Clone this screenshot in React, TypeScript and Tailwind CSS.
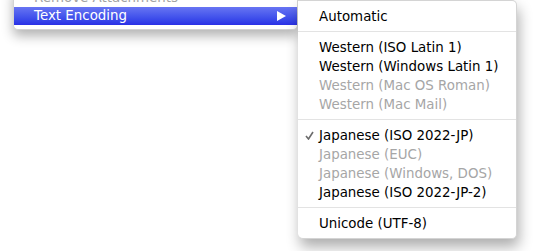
import React from 'react';

type Item = { label: string; disabled?: boolean; checked?: boolean } | 'sep';

const items: Item[] = [
  { label: 'Automatic' },
  'sep',
  { label: 'Western (ISO Latin 1)' },
  { label: 'Western (Windows Latin 1)' },
  { label: 'Western (Mac OS Roman)', disabled: true },
  { label: 'Western (Mac Mail)', disabled: true },
  'sep',
  { label: 'Japanese (ISO 2022-JP)', checked: true },
  { label: 'Japanese (EUC)', disabled: true },
  { label: 'Japanese (Windows, DOS)', disabled: true },
  { label: 'Japanese (ISO 2022-JP-2)' },
  'sep',
  { label: 'Unicode (UTF-8)' },
];

const App: React.FC = () => {
  return (
    <div className="w-[535px] h-[251px] bg-white overflow-hidden font-['DejaVu_Sans',sans-serif] text-[13.4px] leading-none">
      <div className="flex items-start">
        {/* parent menu */}
        <div className="ml-[13px] mt-[-12px] w-[285px] bg-white rounded-b-[5px] border border-t-0 border-[#d4d4d4] shadow-[0_6px_12px_rgba(0,0,0,0.3)] pb-[4px]">
          <div className="h-[19px] flex items-center pl-[20px] text-[#a3a3a3]">Remove Attachments</div>
          <div className="h-[18px] flex items-center justify-between pl-[20px] pr-[11px] text-white bg-gradient-to-b from-[#6874f2] to-[#2a2fe6]">
            <span>Text Encoding</span>
            <svg width="9" height="10" viewBox="0 0 9 10">
              <path d="M0 0 L9 5 L0 10 Z" fill="#fff" />
            </svg>
          </div>
        </div>

        {/* submenu */}
        <div className="w-[219px] bg-white rounded-tr-[5px] rounded-b-[5px] border border-[#d4d4d4] border-l-0 shadow-[2px_8px_14px_rgba(0,0,0,0.32)] pt-[6px] pb-[5px]">
          {items.map((it, i) =>
            it === 'sep' ? (
              <div key={i} className="h-[12px] pt-[5px]">
                <div className="h-px bg-[#e3e3e3]" />
              </div>
            ) : (
              <div
                key={i}
                className={`relative h-[19px] flex items-center pl-[21px] ${it.disabled ? 'text-[#a6a6a6]' : 'text-black'}`}
              >
                {it.checked && (
                  <svg className="absolute left-[7px] top-[5px]" width="9" height="9" viewBox="0 0 9 9">
                    <path d="M1 5 L3.5 8 L8 1" fill="none" stroke="#6b6b6b" strokeWidth="1.6" />
                  </svg>
                )}
                {it.label}
              </div>
            )
          )}
        </div>
      </div>
    </div>
  );
};

export default App;
